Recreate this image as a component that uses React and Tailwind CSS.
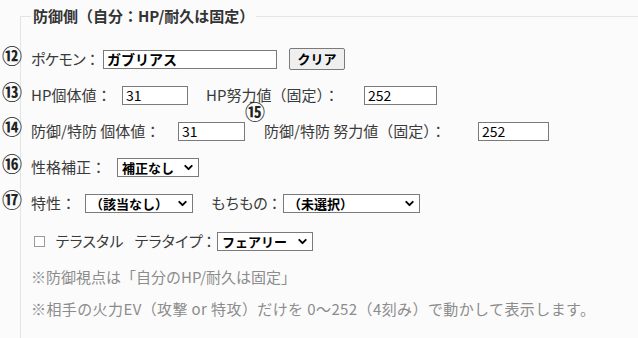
import { ChevronDown } from 'lucide-react';

const font = { fontFamily: '"Noto Sans CJK JP", "Noto Sans", sans-serif' };

// 注釈の丸数字（スクリーンショット上に重ねて置く）
const marks = [
    { n: '⑫', x: 2, y: 47 },
    { n: '⑬', x: 2, y: 83 },
    { n: '⑭', x: 2, y: 118 },
    { n: '⑮', x: 245, y: 103 },
    { n: '⑯', x: 2, y: 155 },
    { n: '⑰', x: 2, y: 191 },
];

function TextBox({ value, width, bold }) {
    return (
        <div
            className={`shrink-0 h-[19px] bg-white border border-[#7a7a7a] flex items-center pl-[3px] text-[14px] text-black leading-none ${bold ? 'font-bold' : ''}`}
            style={{ width }}
        >
            {value}
        </div>
    );
}

function SelectBox({ value, width }) {
    return (
        <div
            className="shrink-0 h-[19px] bg-white border border-[#7a7a7a] flex items-center justify-between pl-[4px] pr-[3px] text-[13px] font-bold text-black leading-none whitespace-nowrap"
            style={{ width }}
        >
            <span>{value}</span>
            <ChevronDown size={13} strokeWidth={3.5} className="text-black" />
        </div>
    );
}

function Label({ children, className = '' }) {
    return <span className={`shrink-0 whitespace-nowrap ${className}`}>{children}</span>;
}

export default function App() {
    return (
        <div className="relative w-[638px] h-[338px] overflow-hidden bg-[#fbfbfb] text-[#3a3a3a]" style={font}>
            <fieldset className="ml-[20px] mt-[4px] w-[640px] h-[400px] border border-[#e4e4e4] pl-[10px] pt-[13px]">
                <legend className="px-[2px] text-[15px] font-bold leading-[24px] text-[#333]">
                    防御側（自分：HP/耐久は固定）
                </legend>

                <div className="h-[36px] flex items-center text-[15px]">
                    <Label className="w-[72px] tracking-[-1.5px]">ポケモン：</Label>
                    <TextBox value="ガブリアス" width={174} bold />
                    <button className="shrink-0 ml-[12px] h-[22px] w-[56px] bg-[#efefef] border border-[#7a7a7a] rounded-[2px] text-[13px] font-bold text-black">
                        クリア
                    </button>
                </div>

                <div className="h-[36px] flex items-center text-[15px]">
                    <Label className="w-[91px]">HP個体値：</Label>
                    <TextBox value="31" width={66} />
                    <Label className="w-[158px] ml-[18px]">HP努力値（固定）：</Label>
                    <TextBox value="252" width={73} />
                </div>

                <div className="h-[36px] flex items-center text-[15px]">
                    <Label className="w-[147px]">防御/特防 個体値：</Label>
                    <TextBox value="31" width={67} />
                    <Label className="w-[214px] ml-[19px]">防御/特防 努力値（固定）：</Label>
                    <TextBox value="252" width={71} />
                </div>

                <div className="h-[36px] flex items-center text-[15px]">
                    <Label className="w-[86px]">性格補正：</Label>
                    <SelectBox value="補正なし" width={82} />
                </div>

                <div className="h-[36px] flex items-center text-[15px]">
                    <Label className="w-[54px]">特性：</Label>
                    <SelectBox value="（該当なし）" width={108} />
                    <Label className="w-[72px] ml-[18px] tracking-[-1px]">もちもの：</Label>
                    <SelectBox value="（未選択）" width={137} />
                </div>

                <div className="h-[36px] mt-[2px] flex items-center text-[15px]">
                    <span className="shrink-0 ml-[3px] w-[11px] h-[11px] border border-[#9a9a9a] bg-white"></span>
                    <Label className="ml-[10px] w-[79px] tracking-[-1.5px]">テラスタル</Label>
                    <Label className="w-[83px] tracking-[-1.5px]">テラタイプ：</Label>
                    <SelectBox value="フェアリー" width={96} />
                </div>

                <div className="h-[36px] flex items-center text-[15px] text-[#8c8c8c] whitespace-nowrap">
                    ※防御視点は「自分のHP/耐久は固定」
                </div>
                <div className="h-[28px] flex items-center text-[15px] text-[#8c8c8c] whitespace-nowrap tracking-[0.4px]">
                    ※相手の火力EV（攻撃 or 特攻）だけを 0〜252（4刻み）で動かして表示します。
                </div>
            </fieldset>

            {marks.map(m => (
                <span
                    key={m.n}
                    className="absolute text-[20px] leading-[18px] font-bold text-[#222]"
                    style={{ left: m.x, top: m.y }}
                >
                    {m.n}
                </span>
            ))}
        </div>
    );
}
